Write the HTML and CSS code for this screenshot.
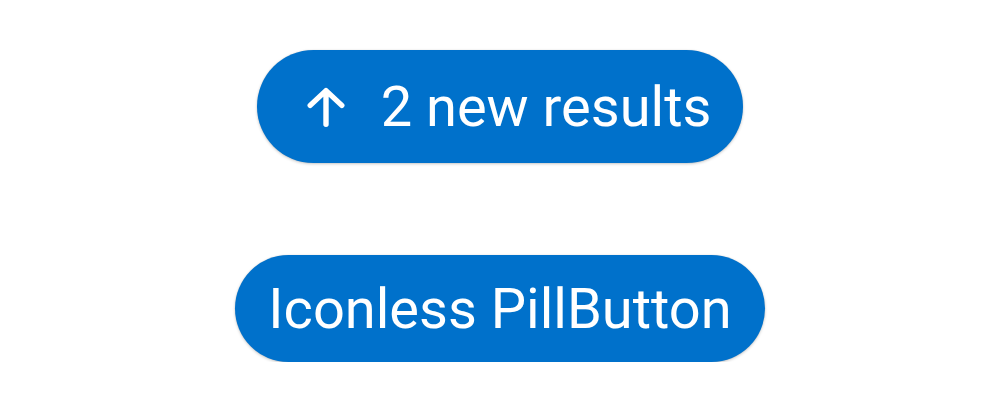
FILE: index.html
```html
<!DOCTYPE html>
<html lang="en">
<head>
<meta charset="utf-8">
<title>PillButton</title>
<link rel="stylesheet" href="styles.css">
</head>
<body>
<main class="stage">
  <button class="pill pill--icon" type="button">
    <svg class="pill__icon" viewBox="0 0 38 40" aria-hidden="true">
      <path d="M19 37.2V3.6M3.2 18.4L19 3.6L34.8 18.4" fill="none" stroke="#fff" stroke-width="5.4" stroke-linecap="round" stroke-linejoin="round"/>
    </svg>
    <span class="pill__label">2 new results</span>
  </button>
  <button class="pill pill--plain" type="button">
    <span class="pill__label">Iconless PillButton</span>
  </button>
</main>
</body>
</html>
```
FILE: styles.css
```css
html, body {
  margin: 0;
  padding: 0;
  background: #ffffff;
}

.stage {
  display: flex;
  flex-direction: column;
  align-items: center;
  padding-top: 50px;
  gap: 92px;
  font-family: Roboto, "Liberation Sans", sans-serif;
}

.pill {
  display: flex;
  align-items: center;
  justify-content: center;
  border: none;
  margin: 0;
  background: #0071cb;
  color: #ffffff;
  font-family: inherit;
  font-size: 56px;
  font-weight: 400;
  line-height: 1;
  border-radius: 60px;
  box-shadow: 0 1px 3px rgba(0, 0, 0, 0.22), 0 0 1px rgba(0, 0, 0, 0.12);
  cursor: pointer;
}

.pill--icon {
  height: 113px;
  padding: 0 32px 0 50px;
}

.pill--plain {
  height: 107px;
  padding: 0 33px;
}

.pill__icon {
  width: 38px;
  height: 40px;
  margin-right: 36px;
  flex: none;
}

.pill__label {
  white-space: nowrap;
}
```
